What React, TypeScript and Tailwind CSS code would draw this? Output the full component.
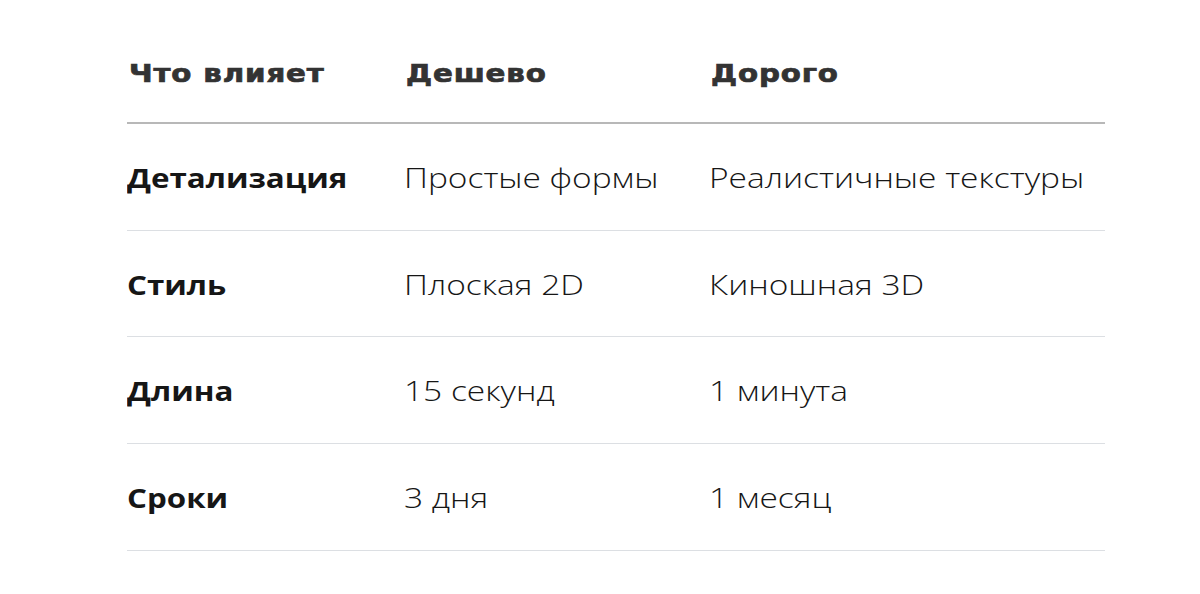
const ROWS = [
  { factor: 'Детализация', cheap: 'Простые формы', pricey: 'Реалистичные текстуры' },
  { factor: 'Стиль', cheap: 'Плоская 2D', pricey: 'Киношная 3D' },
  { factor: 'Длина', cheap: '15 секунд', pricey: '1 минута' },
  { factor: 'Сроки', cheap: '3 дня', pricey: '1 месяц' },
];

const HEAD = ['Что влияет', 'Дешево', 'Дорого'];

export default function App() {
  return (
    <div className="w-[1200px] h-[594px] bg-white pt-[21px] pl-[127px]">
      <div className="w-[978px]">
        <div
          className="grid grid-cols-[277px_305px_1fr] h-[103px] items-center pt-[5px] border-b-2 border-[#b8b8b8] text-[24px] font-bold text-[#333] [-webkit-text-stroke:0.7px_#333]"
          style={{ fontFamily: '"DejaVu Sans", Verdana, sans-serif' }}
        >
          {HEAD.map((h) => (
            <div key={h} className="pl-[2px]">
              <span className="inline-block origin-left scale-x-[1.22] tracking-[0.7px]">{h}</span>
            </div>
          ))}
        </div>
        {ROWS.map((r) => (
          <div
            key={r.factor}
            className="grid grid-cols-[277px_305px_1fr] h-[106.7px] items-center pt-[3px] border-b border-[#dcdfe3] text-[27px] text-[#161616]"
            style={{ fontFamily: '"Open Sans", "Noto Sans", sans-serif' }}
          >
            <div className="font-bold">
              <span className="inline-block origin-left scale-x-[1.16]">{r.factor}</span>
            </div>
            <div className="font-light">
              <span className="inline-block origin-left scale-x-[1.24]">{r.cheap}</span>
            </div>
            <div className="font-light">
              <span className="inline-block origin-left scale-x-[1.24]">{r.pricey}</span>
            </div>
          </div>
        ))}
      </div>
    </div>
  );
}
